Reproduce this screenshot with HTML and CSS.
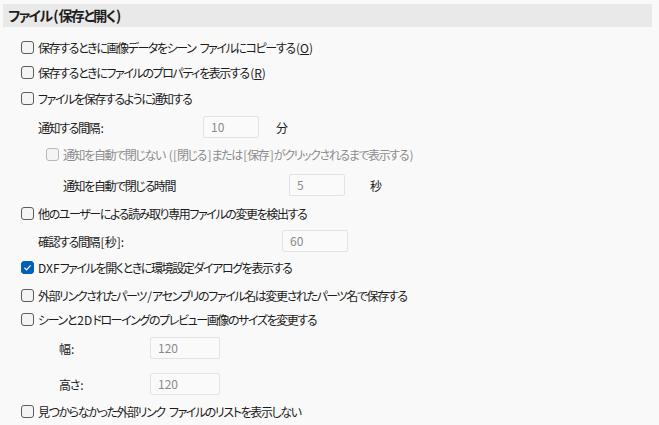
FILE: index.html
```html
<!DOCTYPE html>
<html lang="ja">
<head>
    <meta charset="UTF-8">
    <meta name="viewport" content="width=device-width, initial-scale=1.0">
    <title>ファイル(保存と開く)</title>
    <link rel="stylesheet" href="styles.css">
</head>
<body>
    <div class="section-title">ファイル<span class="lat">(</span>保存と開く<span class="lat">)</span></div>

    <div class="options">
        <label class="row gap8">
            <span class="box"></span>
            <span>保存するときに画像データをシーン<span class="lat"> </span>ファイルにコピーする<span class="lat">(<u>O</u>)</span></span>
        </label>
        <label class="row gap1">
            <span class="box"></span>
            <span>保存するときにファイルのプロパティを表示する<span class="lat">(<u>R</u>)</span></span>
        </label>
        <label class="row gap2">
            <span class="box"></span>
            <span>ファイルを保存するように通知する</span>
        </label>

        <div class="field gap6 indent1">
            <span class="field-label w165">通知する間隔<span class="lat">:</span></span>
            <span class="input w56">10</span>
            <span class="unit">分</span>
        </div>

        <label class="row gap4 indent2 disabled">
            <span class="box"></span>
            <span>通知を自動で閉じない<span class="lat"> ([</span>閉じる<span class="lat">]</span>または<span class="lat">[</span>保存<span class="lat">]</span>がクリックされるまで表示する<span class="lat">)</span></span>
        </label>

        <div class="field gap8 indent3">
            <span class="field-label w226">通知を自動で閉じる時間</span>
            <span class="input w56">5</span>
            <span class="unit u25">秒</span>
        </div>

        <label class="row gap5">
            <span class="box"></span>
            <span>他のユーザーによる読み取り専用ファイルの変更を検出する</span>
        </label>

        <div class="field gap5 indent1">
            <span class="field-label w244">確認する間隔<span class="lat">[</span>秒<span class="lat">]:</span></span>
            <span class="input w66">60</span>
        </div>

        <label class="row gap3">
            <span class="box checked">
                <svg width="9" height="9" viewBox="0 0 9 9"><path d="M1.5 4.8 L3.6 6.8 L7.6 2.4" fill="none" stroke="#fff" stroke-width="1.2"/></svg>
            </span>
            <span><span class="lat first">DXF</span>ファイルを開くときに環境設定ダイアログを表示する</span>
        </label>
        <label class="row gap4">
            <span class="box"></span>
            <span>外部リンクされたパーツ<span class="lat">/</span>アセンブリのファイル名は変更されたパーツ名で保存する</span>
        </label>
        <label class="row">
            <span class="box"></span>
            <span>シーンと<span class="lat">2D</span>ドローイングのプレビュー画像のサイズを変更する</span>
        </label>

        <div class="field gap6 indent4">
            <span class="field-label w91">幅<span class="lat">:</span></span>
            <span class="input w70">120</span>
        </div>
        <div class="field gap14 indent4">
            <span class="field-label w91">高さ<span class="lat">:</span></span>
            <span class="input w70">120</span>
        </div>

        <label class="row gap4">
            <span class="box"></span>
            <span>見つからなかった外部リンク<span class="lat"> </span>ファイルのリストを表示しない</span>
        </label>
    </div>
</body>
</html>
```

FILE: styles.css
```css
body {
    margin: 0;
    background: #f9f9f9;
    color: #1b1b1b;
    font-family: "Noto Sans CJK JP", "Noto Sans", sans-serif;
    font-size: 12px;
    font-feature-settings: "palt";
    letter-spacing: -1.4px;
}
/* latin runs keep normal spacing */
.lat {
    letter-spacing: 0;
    margin-left: 1.4px;
}
.lat.first {
    margin-left: 0;
}
.section-title {
    margin: 4px 7px 0 3px;
    height: 23px;
    line-height: 23px;
    padding-left: 5px;
    background: #e9e9e9;
    font-size: 14px;
    font-weight: bold;
    letter-spacing: -1.6px;
    color: #1e1e1e;
}
.section-title .lat {
    margin-left: 1.6px;
}
.options {
    display: flex;
    flex-direction: column;
    padding-left: 21px;
}
.row {
    display: flex;
    align-items: center;
    gap: 4px;
    height: 24px;
}
.field {
    display: flex;
    align-items: center;
    height: 22px;
}
.box {
    box-sizing: border-box;
    width: 13px;
    height: 13px;
    border: 1px solid #5c5c5c;
    border-radius: 3px;
    background: #f4f4f4;
    display: flex;
    align-items: center;
    justify-content: center;
}
.box.checked {
    background: #005fb8;
    border-color: #005fb8;
}
.disabled {
    color: #8c8c8c;
}
.disabled .box {
    border-color: #b8b8b8;
}
.input {
    box-sizing: border-box;
    height: 22px;
    line-height: 20px;
    padding-left: 7px;
    border: 1px solid #e3e3e3;
    border-radius: 2px;
    background: #fafafa;
    color: #8a8a8a;
    letter-spacing: 0;
}
.unit {
    margin-left: 17px;
}
.u25 { margin-left: 25px; }

.indent1 { padding-left: 17px; }
.indent2 { padding-left: 25px; }
.indent3 { padding-left: 42px; }
.indent4 { padding-left: 38px; }

.w165 { width: 165px; }
.w226 { width: 226px; }
.w244 { width: 244px; }
.w91 { width: 91px; }
.w56 { width: 56px; }
.w66 { width: 66px; }
.w70 { width: 70px; }

.gap1 { margin-top: 1px; }
.gap2 { margin-top: 2px; }
.gap3 { margin-top: 3px; }
.gap4 { margin-top: 4px; }
.gap5 { margin-top: 5px; }
.gap6 { margin-top: 6px; }
.gap8 { margin-top: 8px; }
.gap14 { margin-top: 14px; }
```
